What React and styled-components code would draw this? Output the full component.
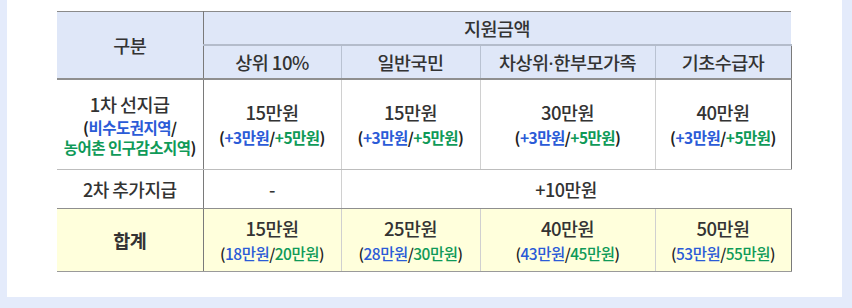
import React from "react";
import styled, { createGlobalStyle } from "styled-components";

const Global = createGlobalStyle`
  html, body { margin: 0; padding: 0; }
  body {
    background: #e4ebfb;
    font-family: "Noto Sans CJK KR", "Noto Sans", sans-serif;
    color: #333;
  }
`;

const Page = styled.div`
  width: 852px;
  height: 308px;
  box-sizing: border-box;
  padding: 0 10px 11px 7px;
`;

const Panel = styled.div`
  background: #fff;
  height: 297px;
  box-sizing: border-box;
  padding: 11px 51px 0 50px;
`;

const Table = styled.table`
  width: 734px;
  border-collapse: collapse;
  table-layout: fixed;
  border-top: 1px solid #8a8a8a;
  border-bottom: 1px solid #9a9a9a;
  letter-spacing: -0.5px;
`;

const Th = styled.th`
  background: #dfe7f8;
  font-weight: 500;
  font-size: 18.5px;
  color: #333;
  height: ${(p) => p.$h}px;
  padding: 0;
  box-sizing: border-box;
  border-right: 1px solid ${(p) => (p.$dark ? "#7a7a7a" : p.$light ? "#b9c2d2" : "transparent")};
  border-bottom: ${(p) => (p.$bb ? p.$bb : "none")};
  text-align: center;
  vertical-align: middle;
`;

const Td = styled.td`
  background: ${(p) => (p.$total ? "#ffffdc" : "#fff")};
  text-align: center;
  vertical-align: middle;
  padding: 0;
  height: ${(p) => p.$h}px;
  box-sizing: border-box;
  border-right: 1px solid ${(p) => (p.$dark ? "#7a7a7a" : p.$light ? "#d0d0d0" : "transparent")};
  border-bottom: 1px solid ${(p) => p.$bb || "#bdbdbd"};
  font-weight: 500;
  font-size: 18px;
  color: #333;
`;

const Main = styled.div`
  font-size: 18.5px;
  line-height: 25px;
  font-weight: ${(p) => (p.$bold ? 700 : 500)};
  color: #333;
`;

const Sub = styled.div`
  font-size: 15.5px;
  line-height: ${(p) => p.$lh || 20}px;
  font-weight: ${(p) => (p.$light ? 500 : 700)};
  color: #222;
`;

const Blue = styled.span`
  color: #2b5bd7;
`;
const Green = styled.span`
  color: #0f9a58;
`;
const Dot = styled.span`
  font-family: "Noto Sans", sans-serif;
  letter-spacing: 0;
`;

const Pair = ({ a, b, light }) => (
  <Sub $lh={24} $light={light}>
    (<Blue>{a}</Blue>/<Green>{b}</Green>)
  </Sub>
);

const cols = [146, 138, 139, 175, 136];

const firstRow = ["15만원", "15만원", "30만원", "40만원"];
const totals = [
  ["15만원", "18만원", "20만원"],
  ["25만원", "28만원", "30만원"],
  ["40만원", "43만원", "45만원"],
  ["50만원", "53만원", "55만원"],
];
const heads = [
  "상위 10%",
  "일반국민",
  <>
    차상위<Dot>·</Dot>한부모가족
  </>,
  "기초수급자",
];

const borderKind = (i) => (i === 3 ? { $dark: true } : i < 3 ? { $light: true } : {});

export default function App() {
  return (
    <>
      <Global />
      <Page>
        <Panel>
          <Table>
            <colgroup>
              {cols.map((w, i) => (
                <col key={i} style={{ width: w }} />
              ))}
            </colgroup>
            <thead>
              <tr>
                <Th rowSpan={2} $h={33} $dark $bb="2px solid #8f8f8f">
                  구분
                </Th>
                <Th colSpan={4} $h={33} $bb="2px solid #b4bccb">
                  지원금액
                </Th>
              </tr>
              <tr>
                {heads.map((h, i) => (
                  <Th key={i} $h={34} {...borderKind(i)} $bb="2px solid #8f8f8f">
                    {h}
                  </Th>
                ))}
              </tr>
            </thead>
            <tbody>
              <tr>
                <Td $h={91} $dark>
                  <Main>1차 선지급</Main>
                  <Sub $lh={20}>
                    (<Blue>비수도권지역</Blue>/
                  </Sub>
                  <Sub $lh={20}>
                    <Green>농어촌 인구감소지역</Green>)
                  </Sub>
                </Td>
                {firstRow.map((v, i) => (
                  <Td key={i} $h={91} {...borderKind(i)}>
                    <Main>{v}</Main>
                    <Pair a="+3만원" b="+5만원" />
                  </Td>
                ))}
              </tr>
              <tr>
                <Td $h={39} $dark $bb="#8f8f8f">
                  2차 추가지급
                </Td>
                <Td $h={39} $light $bb="#8f8f8f">
                  -
                </Td>
                <Td $h={39} colSpan={3} $bb="#8f8f8f">
                  +10만원
                </Td>
              </tr>
              <tr>
                <Td $h={63} $total $dark $bb="#9a9a9a">
                  <Main $bold>합계</Main>
                </Td>
                {totals.map(([v, a, b], i) => (
                  <Td key={i} $h={63} $total {...borderKind(i)} $bb="#9a9a9a">
                    <Main>{v}</Main>
                    <Pair a={a} b={b} light />
                  </Td>
                ))}
              </tr>
            </tbody>
          </Table>
        </Panel>
      </Page>
    </>
  );
}
